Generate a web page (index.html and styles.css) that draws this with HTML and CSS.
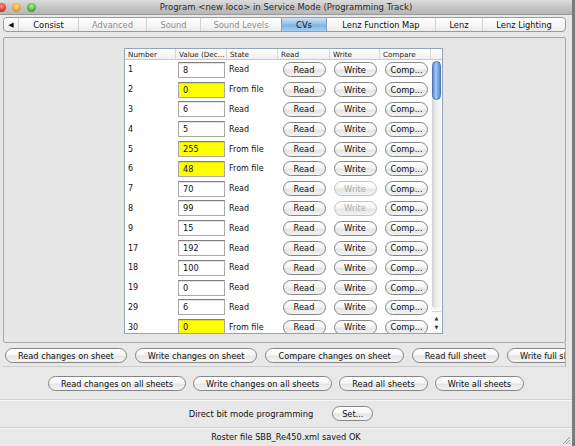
FILE: index.html
```html
<!DOCTYPE html>
<html>
<head>
<meta charset="utf-8">
<link rel="stylesheet" href="styles.css">
</head>
<body>
<div class="window">
  <div class="titlebar">
    <div class="lights">
      <span class="light red"></span><span class="light amber"></span><span class="light green"></span>
    </div>
    <div class="title">Program &lt;new loco&gt; in Service Mode (Programming Track)</div>
    <div></div>
  </div>

  <div class="tabs">
    <div class="tab t-arrow">◀</div>
    <div class="tab t-consist">Consist</div>
    <div class="tab t-adv off">Advanced</div>
    <div class="tab t-sound off">Sound</div>
    <div class="tab t-levels off">Sound Levels</div>
    <div class="tab t-cvs sel">CVs</div>
    <div class="tab t-lfm">Lenz Function Map</div>
    <div class="tab t-lenz">Lenz</div>
    <div class="tab t-light">Lenz Lighting</div>
  </div>

  <div class="panel">
    <div class="table">
      <div class="thead">
        <div class="th c-num">Number</div>
        <div class="th c-val">Value (Dec...</div>
        <div class="th c-state">State</div>
        <div class="th c-read">Read</div>
        <div class="th c-write">Write</div>
        <div class="th c-cmp">Compare</div>
        <div class="th c-corner"></div>
      </div>
      <div class="tbody">
        <div class="rows">
          <div class="row"><div class="c-num">1</div><div class="c-val"><span class="field">8</span></div><div class="c-state">Read</div><div class="c-read"><span class="btn sm">Read</span></div><div class="c-write"><span class="btn sm">Write</span></div><div class="c-cmp"><span class="btn sm">Comp...</span></div></div>
          <div class="row"><div class="c-num">2</div><div class="c-val"><span class="field yellow">0</span></div><div class="c-state">From file</div><div class="c-read"><span class="btn sm">Read</span></div><div class="c-write"><span class="btn sm">Write</span></div><div class="c-cmp"><span class="btn sm">Comp...</span></div></div>
          <div class="row"><div class="c-num">3</div><div class="c-val"><span class="field">6</span></div><div class="c-state">Read</div><div class="c-read"><span class="btn sm">Read</span></div><div class="c-write"><span class="btn sm">Write</span></div><div class="c-cmp"><span class="btn sm">Comp...</span></div></div>
          <div class="row"><div class="c-num">4</div><div class="c-val"><span class="field">5</span></div><div class="c-state">Read</div><div class="c-read"><span class="btn sm">Read</span></div><div class="c-write"><span class="btn sm">Write</span></div><div class="c-cmp"><span class="btn sm">Comp...</span></div></div>
          <div class="row"><div class="c-num">5</div><div class="c-val"><span class="field yellow">255</span></div><div class="c-state">From file</div><div class="c-read"><span class="btn sm">Read</span></div><div class="c-write"><span class="btn sm">Write</span></div><div class="c-cmp"><span class="btn sm">Comp...</span></div></div>
          <div class="row"><div class="c-num">6</div><div class="c-val"><span class="field yellow">48</span></div><div class="c-state">From file</div><div class="c-read"><span class="btn sm">Read</span></div><div class="c-write"><span class="btn sm">Write</span></div><div class="c-cmp"><span class="btn sm">Comp...</span></div></div>
          <div class="row"><div class="c-num">7</div><div class="c-val"><span class="field">70</span></div><div class="c-state">Read</div><div class="c-read"><span class="btn sm">Read</span></div><div class="c-write"><span class="btn sm disabled">Write</span></div><div class="c-cmp"><span class="btn sm">Comp...</span></div></div>
          <div class="row"><div class="c-num">8</div><div class="c-val"><span class="field">99</span></div><div class="c-state">Read</div><div class="c-read"><span class="btn sm">Read</span></div><div class="c-write"><span class="btn sm disabled">Write</span></div><div class="c-cmp"><span class="btn sm">Comp...</span></div></div>
          <div class="row"><div class="c-num">9</div><div class="c-val"><span class="field">15</span></div><div class="c-state">Read</div><div class="c-read"><span class="btn sm">Read</span></div><div class="c-write"><span class="btn sm">Write</span></div><div class="c-cmp"><span class="btn sm">Comp...</span></div></div>
          <div class="row"><div class="c-num">17</div><div class="c-val"><span class="field">192</span></div><div class="c-state">Read</div><div class="c-read"><span class="btn sm">Read</span></div><div class="c-write"><span class="btn sm">Write</span></div><div class="c-cmp"><span class="btn sm">Comp...</span></div></div>
          <div class="row"><div class="c-num">18</div><div class="c-val"><span class="field">100</span></div><div class="c-state">Read</div><div class="c-read"><span class="btn sm">Read</span></div><div class="c-write"><span class="btn sm">Write</span></div><div class="c-cmp"><span class="btn sm">Comp...</span></div></div>
          <div class="row"><div class="c-num">19</div><div class="c-val"><span class="field">0</span></div><div class="c-state">Read</div><div class="c-read"><span class="btn sm">Read</span></div><div class="c-write"><span class="btn sm">Write</span></div><div class="c-cmp"><span class="btn sm">Comp...</span></div></div>
          <div class="row"><div class="c-num">29</div><div class="c-val"><span class="field">6</span></div><div class="c-state">Read</div><div class="c-read"><span class="btn sm">Read</span></div><div class="c-write"><span class="btn sm">Write</span></div><div class="c-cmp"><span class="btn sm">Comp...</span></div></div>
          <div class="row"><div class="c-num">30</div><div class="c-val"><span class="field yellow">0</span></div><div class="c-state">From file</div><div class="c-read"><span class="btn sm">Read</span></div><div class="c-write"><span class="btn sm">Write</span></div><div class="c-cmp"><span class="btn sm">Comp...</span></div></div>
        </div>
        <div class="vscroll">
          <div class="track"><div class="thumb"></div></div>
          <div class="arrows"><span class="arr">▲</span><span class="arr">▼</span></div>
        </div>
      </div>
    </div>
  </div>

  <div class="sheetbar">
    <span class="btn">Read changes on sheet</span>
    <span class="btn">Write changes on sheet</span>
    <span class="btn">Compare changes on sheet</span>
    <span class="btn">Read full sheet</span>
    <span class="btn">Write full sheet</span>
  </div>

  <div class="allbar">
    <span class="btn">Read changes on all sheets</span>
    <span class="btn">Write changes on all sheets</span>
    <span class="btn">Read all sheets</span>
    <span class="btn">Write all sheets</span>
  </div>

  <div class="directbar">
    <span class="label">Direct bit mode programming</span>
    <span class="btn set">Set...</span>
  </div>

  <div class="status">Roster file SBB_Re450.xml saved OK</div>

  <svg class="grip" width="10" height="10" viewBox="0 0 10 10">
    <path d="M9 2 L2 9 M9 5 L5 9 M9 8 L8 9" stroke="#9a9a9a" stroke-width="1" fill="none"/>
  </svg>
</div>
</body>
</html>
```
FILE: styles.css
```css
* { box-sizing: border-box; }
html, body { margin: 0; padding: 0; }
body {
  width: 575px;
  height: 446px;
  overflow: hidden;
  background: #7b7b7b;
  font-family: "DejaVu Sans", "Liberation Sans", sans-serif;
  color: #000;
}
.window {
  width: 572px;
  height: 446px;
  background: #e8e8e8;
  display: flex;
  flex-direction: column;
  position: relative;
  overflow: hidden;
}

/* title bar */
.titlebar {
  height: 15px;
  flex: none;
  display: grid;
  grid-template-columns: 1fr auto 1fr;
  align-items: center;
  background: linear-gradient(#dcdcdc, #c2c2c2 60%, #b6b6b6);
  border-bottom: 1px solid #999;
}
.lights { display: flex; gap: 6px; margin-left: -3px; }
.light { width: 9px; height: 9px; border-radius: 50%; display: block; }
.red { background: radial-gradient(circle at 50% 35%, #ff9a90, #d8352c 60%, #a8221b); }
.amber { background: radial-gradient(circle at 50% 35%, #ffe09a, #e8a028 60%, #b07514); }
.green { background: radial-gradient(circle at 50% 35%, #b8f0a0, #4cae38 60%, #2f7d20); }
.title { font-size: 8.5px; color: #2b2b2b; white-space: nowrap; }

/* tabs */
.tabs {
  flex: none;
  margin: 2px 6px 0 3px;
  height: 15px;
  display: flex;
  border: 1px solid #9b9b9b;
  border-radius: 4px;
  background: linear-gradient(#ffffff, #f6f6f6 55%, #ebebeb);
  overflow: hidden;
}
.tab {
  display: flex;
  align-items: center;
  justify-content: center;
  font-size: 8.3px;
  color: #111;
  border-left: 1px solid #d2d2d2;
  white-space: nowrap;
}
.tab.off { color: #8c8c8c; }
.tab.sel { background: linear-gradient(#cfe3f7, #8fbdea 50%, #79aee6 51%, #a9cff3); border-left-color: #7d9ec4; border-right: 1px solid #7d9ec4; }
.t-arrow { width: 14px; border-left: none; font-size: 7px; }
.t-consist { width: 60px; }
.t-adv { width: 68px; }
.t-sound { width: 54px; }
.t-levels { width: 81px; }
.t-cvs { width: 46px; }
.t-lfm { width: 108px; border-left: none; }
.t-lenz { width: 47px; }
.t-light { flex: 1; }

/* panel */
.panel {
  flex: none;
  margin: 5px 6px 0 3px;
  height: 306px;
  border: 1px solid #a8a8a8;
  border-radius: 2px;
  background: #e6e6e6;
  display: flex;
  justify-content: center;
  padding: 10px 2px 0 0;
}
.table {
  width: 319px;
  height: 286px;
  border: 1px solid #93a3bb;
  background: #fff;
  display: flex;
  flex-direction: column;
}
.thead {
  height: 11px;
  flex: none;
  display: flex;
  background: linear-gradient(#ffffff, #f0f0f0);
  border-bottom: 1px solid #c9c9c9;
  font-size: 7.2px;
  color: #222;
}
.th {
  padding-left: 3px;
  border-right: 1px solid #d8d8d8;
  display: flex;
  align-items: center;
  white-space: nowrap;
  overflow: hidden;
}
.th.c-corner { border-right: none; flex: 1; }
.c-num { width: 51px; }
.c-val { width: 51px; }
.c-state { width: 51px; }
.c-read { width: 52px; }
.c-write { width: 50px; }
.c-cmp { width: 51px; }

.tbody { flex: 1; display: flex; min-height: 0; }
.rows { width: 306px; overflow: hidden; }
.row {
  height: 19.8px;
  display: flex;
  align-items: center;
  font-size: 8px;
  color: #111;
}
.row > div { display: flex; align-items: center; }
.row .c-num { padding-left: 3px; }
.row .c-state { padding-left: 2px; white-space: nowrap; }
.row .c-read, .row .c-write, .row .c-cmp { justify-content: center; }
.row .c-cmp { padding-left: 2px; }
.field {
  margin-left: 2px;
  width: 47px;
  height: 16px;
  display: flex;
  align-items: center;
  padding-left: 4px;
  background: #fff;
  border: 1px solid #a9a9a9;
  border-top-color: #7e7e7e;
  box-shadow: inset 0 1px 1px rgba(0,0,0,0.12);
  font-size: 8.2px;
}
.field.yellow { background: #ffff00; }

.vscroll {
  flex: 1;
  display: flex;
  flex-direction: column;
  background: #fafafa;
  padding: 1px 1px 0 1px;
}
.track {
  flex: 1;
  border-radius: 5px;
  background: linear-gradient(90deg, #d2d2d2, #ececec 40%, #f7f7f7);
  margin-bottom: 2px;
}
.thumb {
  height: 39px;
  border-radius: 5px;
  border: 1px solid #4f77b3;
  background: linear-gradient(90deg, #5c8fd4, #a9cdf5 45%, #8bb7ec 55%, #5a8bd0);
}
.arrows {
  height: 22px;
  flex: none;
  display: flex;
  flex-direction: column;
  align-items: center;
  justify-content: center;
  border-top: 1px solid #d5d5d5;
}
.arr { font-size: 5px; line-height: 9px; color: #333; }

/* buttons */
.btn {
  flex: none;
  height: 15px;
  display: inline-flex;
  align-items: center;
  justify-content: center;
  padding: 0 12px;
  border: 1px solid #858585;
  border-radius: 8px;
  background: linear-gradient(#ffffff, #f6f6f6 45%, #e6e6e6 55%, #f3f3f3);
  font-size: 8.2px;
  color: #111;
  white-space: nowrap;
}
.btn.sm { width: 43px; padding: 0; font-size: 8.3px; height: 15px; }
.btn.disabled { color: #ababab; border-color: #c2c2c2; }

.sheetbar {
  flex: none;
  margin: 0 6px 0 3px;
  height: 24px;
  display: flex;
  gap: 8px;
  padding: 5px 0 0 2px;
  border-right: 1px solid #b3b3b3;
  border-bottom: 1px solid #cfcfcf;
  overflow: hidden;
}
.allbar {
  flex: none;
  height: 33px;
  display: flex;
  align-items: center;
  justify-content: center;
  gap: 7px;
  padding: 1px 0 0 0;
  border-bottom: 1px solid #d2d2d2;
  box-shadow: 0 1px 0 #f6f6f6;
}
.directbar {
  flex: none;
  height: 28px;
  display: flex;
  align-items: center;
  justify-content: center;
  gap: 19px;
  padding-right: 10px;
  border-bottom: 1px solid #d2d2d2;
  box-shadow: 0 1px 0 #f6f6f6;
}
.label { font-size: 8.4px; color: #111; }
.btn.set { width: 41px; padding: 0; }
.status {
  flex: 1;
  display: flex;
  align-items: center;
  justify-content: center;
  font-size: 8.2px;
  color: #111;
  padding-bottom: 1px;
}
.grip { position: absolute; right: 1px; bottom: 1px; }
```
